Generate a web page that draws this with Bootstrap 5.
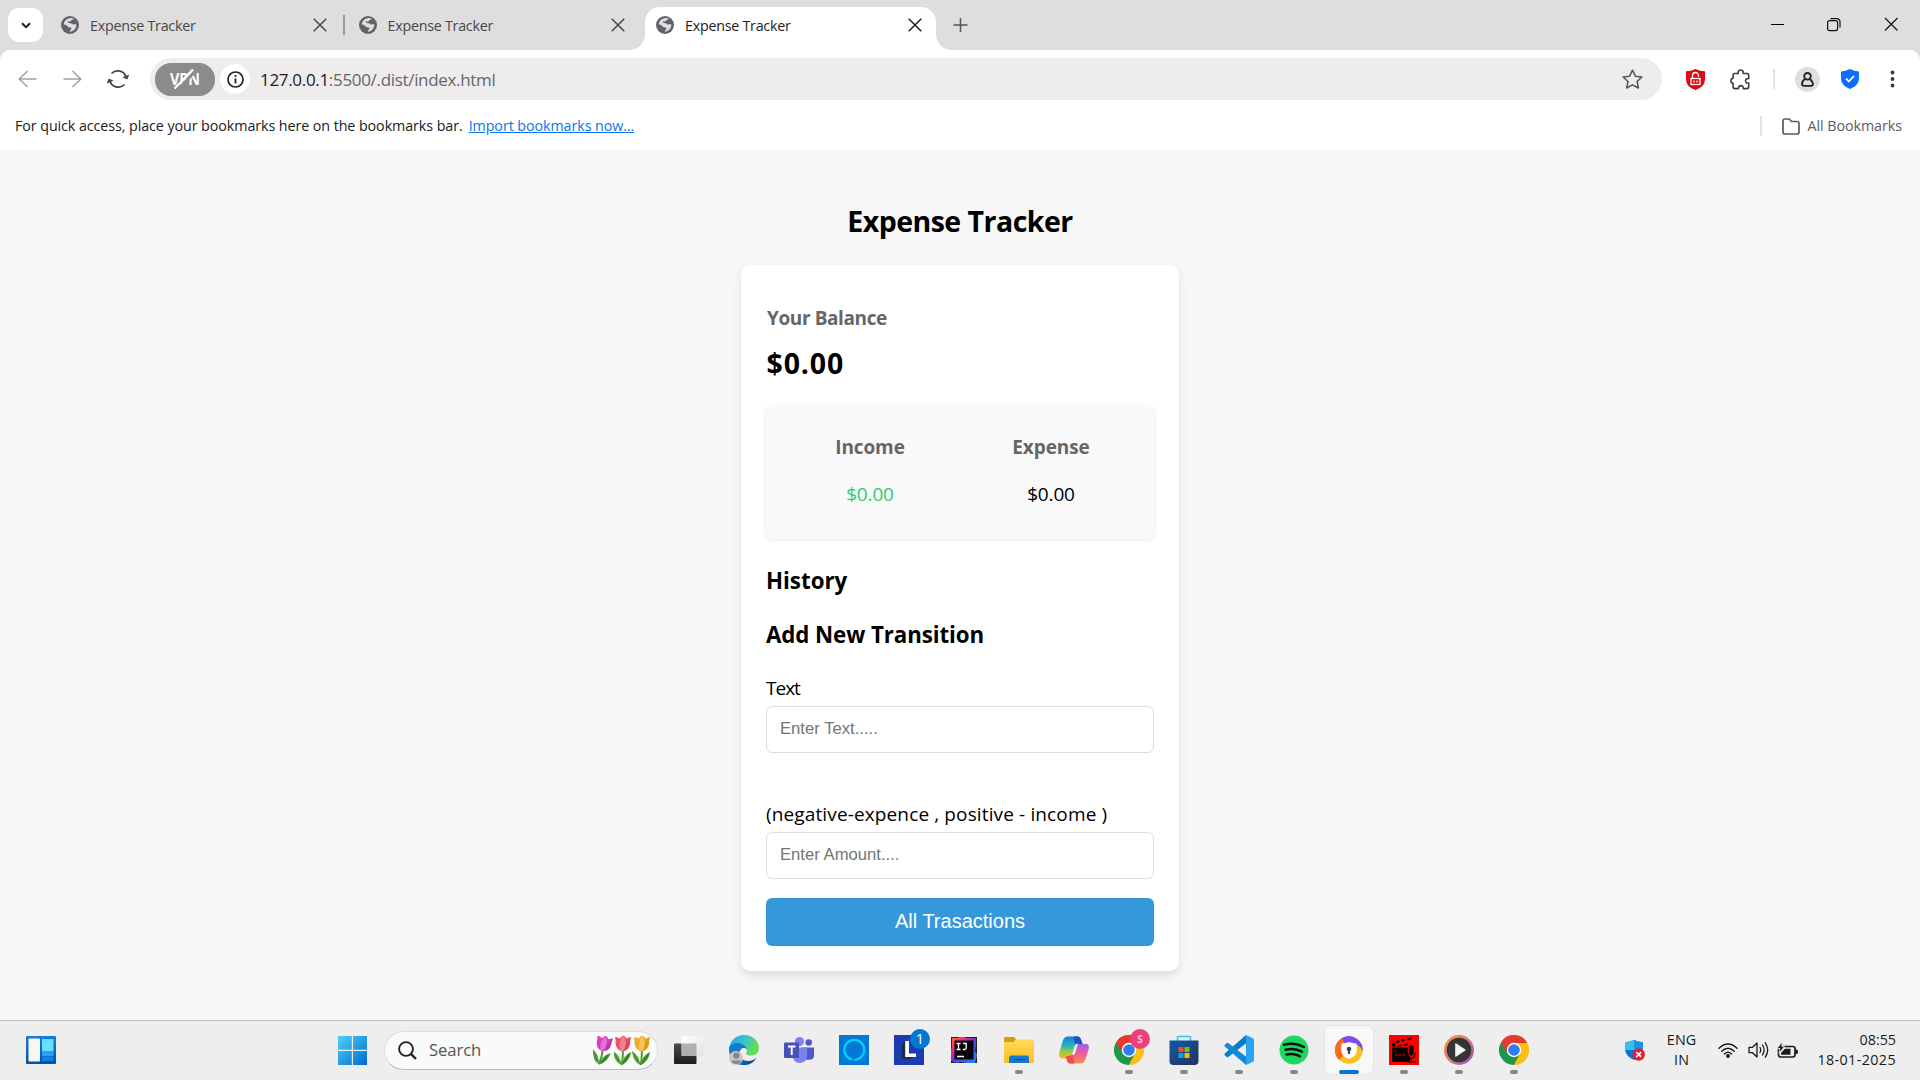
<!DOCTYPE html>
<html lang="en">
<head>
<meta charset="utf-8">
<meta name="viewport" content="width=device-width, initial-scale=1">
<title>Expense Tracker</title>
<link href="https://cdn.jsdelivr.net/npm/bootstrap@5.3.0/dist/css/bootstrap.min.css" rel="stylesheet">
<script src="https://cdn.jsdelivr.net/npm/bootstrap@5.3.0/dist/js/bootstrap.bundle.min.js" defer></script>
<style>
body{font-family:"Open Sans","Noto Sans",sans-serif;font-size:14.3px;line-height:20px;color:#000;background:#f7f7f7;height:1080px;overflow:hidden}
svg{display:block;flex:none}
/* tab strip */
.strip{height:50px;background:#dedede;padding-left:8px}
.tabfind{width:35px;height:34px;margin:8px 7px 0 0;border-radius:11px;background:#fff}
.tabitem{width:291px;height:43px;margin-top:7px;padding:0 14px 7px 11px;color:#474747;letter-spacing:-.26px}
.tabitem span{margin-left:11px;margin-top:2px}
.tabitem.current{background:#fff;border-radius:15px 15px 0 0;color:#1d1d1d;position:relative}
.tabitem.current::before,.tabitem.current::after{content:"";position:absolute;bottom:0;width:15px;height:15px}
.tabitem.current::before{left:-15px;background:radial-gradient(circle at 0 0,transparent 14.5px,#fff 15px)}
.tabitem.current::after{right:-15px;background:radial-gradient(circle at 100% 0,transparent 14.5px,#fff 15px)}
.tabsep{width:2px;height:20px;margin:15px 2.5px 0 2px;background:#999}
.tabgap{width:6.5px}
.newtab{margin:18px 0 0 15px}
.winbtns{margin:16px 21px 0 auto;gap:41px}
/* toolbar */
.chrometop{background:#dedede}
.toolbar-row{height:58px;background:#fff;border-radius:10px 10px 0 0;padding-left:18px}
.address{width:1512px;height:42px;border-radius:21px;background:#eeeced;padding-left:5px}
.vpn{width:60px;height:33px;border-radius:16px;background:#8b8b8b}
.infobtn{width:30px;height:30px;border-radius:15px;background:#fff;margin:0 10px 0 5px}
.url{font-size:17px;letter-spacing:-.32px;color:#666;padding-top:1px}
.url b{font-weight:400;color:#202020}
.vsep{width:2px;height:20px;background:#e3e3e3}
.avatar{width:25px;height:25px;background:#dedede}
.bookmarks{height:43px;background:#fff;padding:0 18px 6px 15px;border-bottom:1px solid #f3f3f3;letter-spacing:-.08px;color:#202020}
.bookmarks a{color:#0b74ee;margin-left:6px;letter-spacing:-.08px}
.allbm{color:#5c5c5c;letter-spacing:-.06px}
/* page */
.page{height:869px}
.title{font-size:28.5px;line-height:40px;font-weight:700;letter-spacing:-.52px;margin:50px 0 24px}
.tracker{width:438px;height:706px;border-radius:10px;background:#fff;padding:39px 25px 25px;box-shadow:0 5px 10px rgba(0,0,0,.1)}
.t19{font-size:19px;line-height:28px}
.grey{color:#666;font-weight:700}
.balance{letter-spacing:-.4px;padding-left:1px}
.caption-in{letter-spacing:-.1px}
.amount{font-size:28.5px;line-height:40px;font-weight:700;letter-spacing:.87px;margin:11px 0 23px;padding-left:.5px}
.sums{height:133px;border-radius:6px;background:#f9f9f9;box-shadow:0 1px 4px rgba(0,0,0,.1);padding:27px 12.5px 0 13.5px}
.sums>div{width:181px}
.money{margin-top:19px;letter-spacing:-.15px}
.gain{color:#2ecc71}
.sect{font-size:22.3px;line-height:32px;font-weight:700;margin-top:26px}
.sect+.sect{margin-top:22px;letter-spacing:-.08px}
.field{height:47px;border:1px solid #ddd;border-radius:6px;padding:0 13px 1px;font:16.67px "Liberation Sans",sans-serif;background:#fff}
.field::placeholder{color:#757575}
.lab-text{margin:23px 0 4px;letter-spacing:-1px}
.lab-amount{margin:47px 0 4px;letter-spacing:.13px}
.allbtn{height:48px;border:0;border-radius:6px;background:#3498db;color:#fff;font:20px "Liberation Sans",sans-serif;margin-top:19px;padding-bottom:2px}
/* taskbar */
.taskbar{height:60px;background:#eee;border-top:1px solid #bbb;padding:0 0 1px 26px}
.searchpill{width:274px;height:39px;border-radius:20px;background:#fafafa;border:1px solid #dcdcdc;border-bottom-color:#bbb;margin:0 7px 0 17px;padding:0 5px 0 13px}
.searchpill span{font-size:16.7px;color:#555;letter-spacing:-.12px;margin-left:12px}
.app{width:48px;height:48px;margin-right:7px;border-radius:6px;position:relative}
.app.run::after{content:"";position:absolute;left:20px;bottom:0;width:8px;height:4px;border-radius:2px;background:#868686}
.app.on{background:#f8f8f8;box-shadow:0 0 1px 1px #e4e4e4}
.app.on::after{left:14px;width:20px;background:#0078d4}
.pip{position:absolute;left:25px;top:3px;width:20px;height:20px;background:#0078d4;color:#fff;font-size:14.5px}
.pip.pink{background:#ec407a;color:#f9c3d4;font-size:10px;font-weight:700}
.tray{margin-right:24px;color:#1a1a1a}
.lang{margin:0 22px;letter-spacing:.15px}
.clock{margin-left:18px}
.clock span{letter-spacing:.4px}
</style>
</head>
<body>
<svg width="0" height="0" class="position-absolute">
<defs>
<symbol id="globe" viewBox="0 0 18 18"><circle cx="9" cy="9" r="9" fill="#5f6368"/><path d="M8.6 2.2c1.5-.4 3-.1 4.1.6-.4 1-1.200.9-2 1.300-.9.4-.8 1.500-1.900 1.500-.8 0-1.200-.4-2-.3-.3.9.3 1.700 1.400 1.800 1.600.1 3 .6 3.700 1.700 1.100-.7 2.100-.5 3.500-.3-.1 3.800-2.600 7-6.500 7.200-.3-.9.300-1.500 1-2 .6-.5.8-1.800-.2-2.100-1-.3-2.300-.4-3.100-1.200-.9-.9-1.100-2-3.900-1.900.2-3.100 2.300-5.700 5.900-6.300z" fill="#dedede"/></symbol>
<symbol id="cross" viewBox="0 0 14 14"><path d="M.7.7l12.600 12.600M13.300.7L.7 13.300" stroke="currentColor" stroke-width="1.500" fill="none"/></symbol>
<symbol id="gchrome" viewBox="0 0 30 30"><path d="M15 15L2 7.500A15 15 0 0 1 28 7.500z" fill="#e33b2e"/><path d="M15 15l13-7.500A15 15 0 0 1 15 30z" fill="#fcc012"/><path d="M2 7.500A15 15 0 0 0 15 30l6.200-11.300L15 15z" fill="#21964a"/><path d="M2 7.500L8.800 18.600 15 8h13A15 15 0 0 0 2 7.500z" fill="#e33b2e"/><path d="M15 8h13.200A15 15 0 0 1 15 30l6.300-11.400z" fill="#fcc012"/><circle cx="15" cy="15" r="7.200" fill="#fff"/><circle cx="15" cy="15" r="5.800" fill="#2f7ded"/></symbol>
<symbol id="tulip" viewBox="0 0 22 30"><path d="M10.500 13Q11.500 22 9.500 30" stroke="#4c9a34" stroke-width="2" fill="none"/><path d="M9.500 30Q2 27 1 16q7 4 8.500 14zM10 30q1-10 9-13-1 9-9 13z" fill="#5aab3c"/><path d="M9.500 30Q6 23 1 16q4 9 8.500 14zM10 30q6-5 9-13-7 6-9 13z" fill="#2f7d2b"/><path d="M3 2q3 0 5 1.500Q9.500 1 11.500.500 13.500 1.500 14.500 3.500q2-1.500 4.500-1.500-1 3-.8 6.500Q17.500 15 11 16.500 4 15 3.500 8.500 4 5 3 2z" fill="currentColor"/><path d="M11.500.5q-5 6-3.500 14Q10 16 11 16q5-7 .500-15.500z" fill="#fff" opacity=".28"/><path d="M18.500 2q-5.500 4-5.500 13.500 4.500-2 4.700-7z" fill="#000" opacity=".1"/></symbol>
<linearGradient id="win" x1="0" y1="0" x2="1" y2="1"><stop offset="0" stop-color="#4fd3fb"/><stop offset="1" stop-color="#0068cc"/></linearGradient>
<linearGradient id="wd" x1="0" y1="0" x2="0" y2="1"><stop offset="0" stop-color="#1580d8"/><stop offset="1" stop-color="#0b4f9e"/></linearGradient>
<linearGradient id="dark" x1="0" y1="0" x2="0" y2="1"><stop offset="0" stop-color="#4a4a4a"/><stop offset="1" stop-color="#1c1c1c"/></linearGradient>
<linearGradient id="lite" x1="0" y1="0" x2="1" y2="1"><stop offset="0" stop-color="#fff"/><stop offset="1" stop-color="#e2e2e2"/></linearGradient>
<linearGradient id="edgeA" x1="0" y1="0" x2="1" y2=".4"><stop offset="0" stop-color="#2aa6e8"/><stop offset=".5" stop-color="#35c1d4"/><stop offset="1" stop-color="#63e04c"/></linearGradient>
<linearGradient id="edgeB" x1="0" y1="0" x2="1" y2="1"><stop offset="0" stop-color="#1383d6"/><stop offset="1" stop-color="#0a3f86"/></linearGradient>
<linearGradient id="fold" x1="0" y1="0" x2="0" y2="1"><stop offset="0" stop-color="#ffda5c"/><stop offset="1" stop-color="#fcbc22"/></linearGradient>
<linearGradient id="copA" x1="0" y1="0" x2="0" y2="1"><stop offset="0" stop-color="#1a7fd4"/><stop offset=".4" stop-color="#22b3c4"/><stop offset=".7" stop-color="#9ecb3c"/><stop offset="1" stop-color="#fbb62b"/></linearGradient>
<linearGradient id="copB" x1="0" y1="0" x2="0" y2="1"><stop offset="0" stop-color="#a45cf0"/><stop offset=".5" stop-color="#ee5c98"/><stop offset="1" stop-color="#f98a4a"/></linearGradient>
<linearGradient id="store" x1="0" y1="0" x2="1" y2="1"><stop offset="0" stop-color="#0f5aa6"/><stop offset="1" stop-color="#27335c"/></linearGradient>
<linearGradient id="ij" x1="0" y1="0" x2="1" y2="1"><stop offset="0" stop-color="#fe7a1c"/><stop offset=".25" stop-color="#fb2b72"/><stop offset=".5" stop-color="#5a3ce0"/><stop offset="1" stop-color="#1c8cf5"/></linearGradient>
<linearGradient id="mp" x1="0" y1="0" x2="1" y2="1"><stop offset="0" stop-color="#f59339"/><stop offset=".5" stop-color="#d97b77"/><stop offset="1" stop-color="#8c50c8"/></linearGradient>
</defs>
</svg>

<header class="chrometop">
  <div class="strip d-flex">
    <div class="tabfind d-flex align-items-center justify-content-center"><svg width="10" height="7" viewBox="0 0 10 7"><path d="M1 1.200l4 4 4-4" stroke="#1f1f1f" stroke-width="2" fill="none"/></svg></div>
    <div class="tabitem d-flex align-items-center"><svg width="18" height="18"><use href="#globe"/></svg><span>Expense Tracker</span><svg class="ms-auto" width="14" height="14"><use href="#cross"/></svg></div>
    <div class="tabsep"></div>
    <div class="tabitem d-flex align-items-center"><svg width="18" height="18"><use href="#globe"/></svg><span>Expense Tracker</span><svg class="ms-auto" width="14" height="14"><use href="#cross"/></svg></div>
    <div class="tabgap"></div>
    <div class="tabitem current d-flex align-items-center"><svg width="18" height="18"><use href="#globe"/></svg><span>Expense Tracker</span><svg class="ms-auto" width="14" height="14"><use href="#cross"/></svg></div>
    <svg class="newtab" width="18" height="14" viewBox="0 0 18 14"><path d="M9.500 0v14M2.500 7h14" stroke="#555" stroke-width="1.500"/></svg>
    <div class="winbtns d-flex">
      <svg width="16" height="16" viewBox="0 0 16 16"><path d="M2 8.500h13" stroke="#000"/></svg>
      <svg width="16" height="16" viewBox="0 0 16 16" fill="none" stroke="#111" stroke-width="1.200"><rect x="1.600" y="4.600" width="10" height="10" rx="2"/><path d="M4.500 2.600h6.500a3 3 0 0 1 3 3v6"/></svg>
      <svg width="16" height="16" viewBox="0 0 16 16"><path d="M2 2l12.500 12.500M14.500 2L2 14.500" stroke="#111" stroke-width="1.200"/></svg>
    </div>
  </div>
  <div class="toolbar-row d-flex align-items-center">
    <svg width="19" height="20" viewBox="0 0 19 20"><path d="M9.500 2L1.200 10l8.300 8M1.200 10H18.500" stroke="#a2a2a2" stroke-width="1.500" fill="none"/></svg>
    <svg style="margin-left:26px" width="19" height="20" viewBox="0 0 19 20"><path d="M9.500 2l8.300 8-8.300 8M17.800 10H.5" stroke="#a2a2a2" stroke-width="1.500" fill="none"/></svg>
    <svg style="margin:0 20px 0 24px" width="24" height="22" viewBox="0 0 24 22" fill="none" stroke="#444" stroke-width="1.700"><path d="M5.500 5.500A8.800 8.800 0 0 1 20.300 9.500M18.500 16.500A8.800 8.800 0 0 1 3.700 12.500"/><path d="M23.300 6.500l-2 5-5-2.200zM.7 15.500l2-5 5 2.200z" fill="#444" stroke="none"/></svg>
    <div class="address d-flex align-items-center">
      <div class="vpn d-flex align-items-center justify-content-center"><svg width="32" height="22" viewBox="0 0 32 22"><text x="1" y="17" font-family="Open Sans, sans-serif" font-size="15.500" font-weight="700" fill="#fff" textLength="30" lengthAdjust="spacingAndGlyphs">VPN</text><path d="M9 22L27 2" stroke="#8b8b8b" stroke-width="3"/><path d="M5.500 20.500L24 1.500" stroke="#fff" stroke-width="2.400"/></svg></div>
      <div class="infobtn d-flex align-items-center justify-content-center"><svg width="17" height="17" viewBox="0 0 17 17"><circle cx="8.500" cy="8.500" r="7.500" fill="none" stroke="#222" stroke-width="1.700"/><path d="M8.500 7.400v5" stroke="#222" stroke-width="1.800"/><circle cx="8.500" cy="5" r="1.100" fill="#222"/></svg></div>
      <div class="url"><b>127.0.0.1</b>:5500/.dist/index.html</div>
      <svg class="ms-auto" style="margin-right:19px" width="21" height="20" viewBox="0 0 21 20"><path d="M10.500 1.200l2.900 6 6.500.8-4.800 4.500 1.300 6.500-5.900-3.200L4.700 19 6 12.500 1.100 8l6.500-.8z" fill="none" stroke="#555" stroke-width="1.500" stroke-linejoin="round"/></svg>
    </div>
    <svg style="margin-left:24px" width="19" height="21" viewBox="0 0 19 21"><path d="M9.500 0Q14 2.200 19 2.200V10q0 8-9.500 11Q0 18 0 10V2.200Q5 2.200 9.500 0z" fill="#e30613"/><rect x="5" y="9.500" width="9" height="6" fill="none" stroke="#fff" stroke-width="1.300"/><path d="M6.500 9V6.500a3 3 0 0 1 6 0V8M8 11.500v2M11 11.500v2" stroke="#fff" stroke-width="1.300" fill="none"/></svg>
    <svg style="margin-left:25px" width="21" height="21" viewBox="0 0 21 21"><path d="M4.500 4.500h3.700q-.5-3.300 2.500-3.500 3 .2 2.500 3.500h3.600q1.900 0 1.900 1.900v3.200q-3-.3-3.200 2.200.2 2.500 3.200 2.200v3.700q0 1.900-1.900 1.900h-3.500q.1-3-2.400-3-2.500 0-2.500 3H5q-1.900 0-1.900-1.900v-3.300Q.9 14 .9 11.800q0-2.200 2.200-2.500V6q0-1.500 1.400-1.500z" fill="none" stroke="#3c3c3c" stroke-width="1.600" stroke-linejoin="round"/></svg>
    <div class="vsep" style="margin:0 20px 0 22px"></div>
    <div class="avatar rounded-circle d-flex align-items-center justify-content-center"><svg width="13" height="15" viewBox="0 0 13 15" fill="none" stroke="#1f1f1f" stroke-width="1.800"><circle cx="6.500" cy="4.300" r="3.300"/><path d="M4 7C1.800 8.200 1.200 9.800 1 12q0 1.800 2 1.800h7q2 0 2-1.800-.2-2.200-3-5"/></svg></div>
    <svg style="margin-left:21px" width="18" height="20" viewBox="0 0 18 20"><path d="M9 0q4.500 2.300 9 2.600V9q0 7.500-9 11Q0 16.500 0 9V2.600Q4.500 2.300 9 0z" fill="#0d6efd"/><path d="M5 9.700l2.800 2.800L13 7" stroke="#fff" stroke-width="1.800" fill="none"/></svg>
    <svg style="margin-left:31px" width="5" height="18" viewBox="0 0 5 18" fill="#3a3a3a"><circle cx="2.500" cy="2.500" r="1.900"/><circle cx="2.500" cy="9" r="1.900"/><circle cx="2.500" cy="15.500" r="1.900"/></svg>
  </div>
  <div class="bookmarks d-flex align-items-center">
    <span>For quick access, place your bookmarks here on the bookmarks bar.</span><a href="#">Import bookmarks now...</a>
    <div class="vsep ms-auto"></div>
    <svg style="margin:0 8px 0 20px" width="18" height="17" viewBox="0 0 18 17"><path d="M3 1h4.300l2.200 2.500H15q2 0 2 2V14q0 2-2 2H3q-2 0-2-2V3q0-2 2-2z" fill="none" stroke="#5c5c5c" stroke-width="1.700"/></svg>
    <span class="allbm">All Bookmarks</span>
  </div>
</header>

<main class="page d-flex flex-column align-items-center">
  <h2 class="title">Expense Tracker</h2>
  <div class="tracker d-flex flex-column">
    <div class="t19 grey balance">Your Balance</div>
    <div class="amount">$0.00</div>
    <div class="sums d-flex text-center">
      <div><div class="t19 grey caption-in">Income</div><div class="t19 money gain">$0.00</div></div>
      <div><div class="t19 grey caption-in">Expense</div><div class="t19 money">$0.00</div></div>
    </div>
    <div class="sect">History</div>
    <div class="sect">Add New Transition</div>
    <label class="t19 lab-text" for="text">Text</label>
    <input class="field w-100" id="text" placeholder="Enter Text.....">
    <label class="t19 lab-amount" for="amt">(negative-expence , positive - income )</label>
    <input class="field w-100" id="amt" placeholder="Enter Amount....">
    <button class="allbtn w-100">All Trasactions</button>
  </div>
</main>

<footer class="taskbar d-flex align-items-center">
  <svg width="30" height="28" viewBox="0 0 30 28"><rect width="30" height="28" rx="1" fill="url(#wd)"/><rect x="2.500" y="2.500" width="11.500" height="23" rx="1" fill="#f6f6f6"/><path d="M16 3h11.500v12H16z" fill="#69dcff"/><path d="M16 15h11.500v5H16z" fill="#22a4f8"/><path d="M16 20.500h11.500V25H16z" fill="#0a84ec"/></svg>
  <svg style="margin-left:282px" width="29" height="29" viewBox="0 0 29 29"><path d="M0 0h13.800v13.800H0zM15 0h14v13.800H15zM0 15h13.800v14H0zM15 15h14v14H15z" fill="url(#win)"/></svg>
  <div class="searchpill d-flex align-items-center">
    <svg width="19" height="19" viewBox="0 0 19 19"><circle cx="8" cy="8" r="6.900" fill="#fff" stroke="#222" stroke-width="1.900"/><path d="M12.800 12.800l5.200 5.200" stroke="#222" stroke-width="2.400"/></svg>
    <span>Search</span>
    <svg class="ms-auto" width="22" height="30" viewBox="0 0 22 30" color="#d83cc0"><g transform="rotate(10 11 15)"><use href="#tulip" width="22" height="30"/></g></svg>
    <svg width="18" height="30" viewBox="2 0 18 30" color="#ea5468"><use href="#tulip" width="22" height="30"/></svg>
    <svg width="20" height="30" viewBox="1 0 20 30" color="#f0ab22"><use href="#tulip" width="22" height="30"/></svg>
  </div>
  <div class="app d-flex align-items-center justify-content-center"><svg width="30" height="28" viewBox="0 0 30 28"><rect y="7.500" width="22.500" height="20.500" rx="1" fill="url(#dark)"/><rect x="7.500" width="22" height="20" rx="1" fill="url(#lite)"/><path d="M7.500 7.500h15V20h-15z" fill="#999" opacity=".75"/></svg></div>
  <div class="app d-flex align-items-center justify-content-center"><svg width="30" height="30" viewBox="0 0 30 30"><path d="M0 14C1 5 7.500 0 15 0c9 0 15 6.500 15 13 0 5-4 7.500-8 7.500-4.500 0-6-1.700-4.500-3.500 2-2.500-.5-6.500-4.500-6.500C8 8 3 9 0 14z" fill="url(#edgeA)"/><path d="M0 15c0-5 4-7 8-7 5 0 10 3 10 7-2-3.500-7.500-2-7.500 3.500 0 5 4.500 9.500 10 9.500-3 2-6 2-7.500 2C5.500 30 0 23 0 15z" fill="#117bd0"/><path d="M11 16c-2 6 3 10 8 10 4 0 6.500-1.500 8.500-3.500C25.500 27 21 30 16 30 9 30 6.500 20 11 16z" fill="url(#edgeB)"/><circle cx="7" cy="23" r="7" fill="#c8c8c8"/><circle cx="7.300" cy="20.600" r="3.200" fill="#858585"/><path d="M2.500 25.500h9.600Q12 29 7.300 29q-4.500 0-4.800-3.500z" fill="#858585"/></svg></div>
  <div class="app d-flex align-items-center justify-content-center"><svg width="30" height="26" viewBox="0 0 30 26"><circle cx="15.500" cy="4.500" r="4.500" fill="#7b83eb"/><circle cx="24.700" cy="5.500" r="3.300" fill="#5059c9"/><path d="M18 10.500h12v7.800q0 4.500-5 4.500h-5z" fill="#5059c9"/><path d="M9 10.500h14V19q-.5 7-7.300 7Q9 26 9 19z" fill="#7b83eb"/><rect y="5.500" width="15" height="15.500" rx="1.200" fill="#4850ba"/><path d="M4 9.500h7.500M7.700 9.500v8.500" stroke="#fff" stroke-width="1.900"/></svg></div>
  <div class="app d-flex align-items-center justify-content-center"><svg width="30" height="30" viewBox="0 0 30 30"><path d="M0 0h30v30H0z" fill="#0078d7"/><path d="M13 24.500a9.900 9.900 0 1 1 3.500.2" fill="none" stroke="#00d2ff" stroke-width="2.300"/><path d="M12.500 23.800l4 2.500 2.500-2.200q-3 .8-6.500-.3z" fill="#00d2ff"/></svg></div>
  <div class="app d-flex align-items-center justify-content-center"><svg width="30" height="30" viewBox="0 0 30 30"><path d="M0 0h30v30H0z" fill="#1d3bb0"/><path d="M8 9l3.500-3v13H20l-3 5H8z" fill="#15304f"/><path d="M11.200 6H15v12.500h7V22H11.200z" fill="#fff"/></svg><span class="pip rounded-circle d-flex align-items-center justify-content-center lh-1">1</span></div>
  <div class="app d-flex align-items-center justify-content-center"><svg width="26" height="26" viewBox="0 0 26 26"><path d="M0 0h26v26H0z" fill="#222"/><path d="M1 1h6l1-1h6l1 1h10v7l-1 6 2 4-2 8h-8l-6-1-4 1-6-2V14l1-5z" fill="url(#ij)"/><path d="M3.500 3.500h19v19h-19z" fill="#0a0308"/><path d="M5.500 6.500h4M7.500 6.500v6M5.500 12.500h4M12 6.500h3.200v4.300q0 1.700-1.700 1.700h-1.700M6 19.500h7" stroke="#fff" stroke-width="1.300" fill="none"/></svg></div>
  <div class="app run d-flex align-items-center justify-content-center"><svg width="30" height="28" viewBox="0 0 30 28"><path d="M0 7V2.500Q0 1 1.500 1H10l3 3.500L10 7z" fill="#dd9a0c"/><path d="M0 6h9l3-2.500h16.500Q30 3.500 30 5v20.500q0 1.500-1.500 1.500h-27Q0 27 0 25.500z" fill="url(#fold)"/><path d="M5 27v-5q0-2.500 2.500-2.500h15q2.500 0 2.500 2.500v5z" fill="#1479cf"/><path d="M9 23.500h12" stroke="#0b4f90" stroke-width="1.200"/></svg></div>
  <div class="app d-flex align-items-center justify-content-center"><svg width="30" height="28" viewBox="0 0 30 28"><path d="M9 .5h10q2 0 3 3L23.500 8H20q-3 0-4 3l-2.500 8q-1.200 3.500-4 3.500H3Q-1 22 .5 16l3-10.500Q5 .5 9 .500z" fill="url(#copA)"/><path d="M14.500.5H19q2 0 3 3L23.500 8H20q-2.500 0-3.800 2z" fill="#1e4fc4"/><path d="M21 27.500H11q-2 0-3-3L7 20h3q3 0 4-3l2.500-8Q17.700 8 20.500 8H27q4 0 2.500 5.500L26.500 23q-1.500 4.500-5.500 4.500z" fill="url(#copB)"/><path d="M15.500 27.500H11q-2 0-3-3L7 20h3q2.500 0 3.800-2z" fill="#ef4f46"/><path d="M13 18.500l3-9.500q1-1.500 3-1.500l-3 10q-1.200 2-3 1z" fill="#f4f0f4"/></svg></div>
  <div class="app run d-flex align-items-center justify-content-center"><svg width="30" height="30"><use href="#gchrome"/></svg><span class="pip pink rounded-circle d-flex align-items-center justify-content-center lh-1">S</span></div>
  <div class="app run d-flex align-items-center justify-content-center"><svg width="30" height="30" viewBox="0 0 30 30"><path d="M8.500 7V2.500q0-1 1-1h11q1 0 1 1V7" fill="none" stroke="#2fc3f7" stroke-width="1.600"/><path d="M.5 5.500h29V26q0 4-4 4h-21q-4 0-4-4z" fill="url(#store)"/><path d="M9.500 12h5v5h-5z" fill="#f25022"/><path d="M15.500 12h5v5h-5z" fill="#7fba00"/><path d="M9.500 18h5v5h-5z" fill="#00a4ef"/><path d="M15.500 18h5v5h-5z" fill="#ffb900"/></svg></div>
  <div class="app run d-flex align-items-center justify-content-center"><svg width="30" height="30" viewBox="0 0 30 30"><path d="M22 0L.8 18.500q-.8 1 0 1.800l1.800 1.600q.8.500 1.600 0L22.500 8z" fill="#0a7cc4"/><path d="M22 30L.8 11.500q-.8-1 0-1.800l1.800-1.600q.8-.5 1.600 0L22.500 22z" fill="#1289d2"/><path d="M22 0l7 3.200q1 .5 1 1.600v20.400q0 1.100-1 1.600L22 30z" fill="#2aa4f2"/></svg></div>
  <div class="app run d-flex align-items-center justify-content-center"><svg width="30" height="30" viewBox="0 0 30 30"><circle cx="15" cy="15" r="14.500" fill="#1ed760"/><path d="M5 9.800q10.500-2.800 20 2.200M6.500 14.800q9-2.300 16.500 1.900M7.500 19.500q7.500-1.600 13.500 1.800" fill="none" stroke="#0c0f0d" stroke-width="2.500" stroke-linecap="round"/></svg></div>
  <div class="app run on d-flex align-items-center justify-content-center"><svg width="28" height="28" viewBox="0 0 28 28"><circle cx="14" cy="14" r="13.700" fill="#f9c21b"/><path d="M14 14L4 24A13.700 13.700 0 0 1 9.500 1z" fill="#fb6a1c"/><path d="M14 14L7 2.200A13.700 13.700 0 0 1 27.500 16Q26 9 19 8z" fill="#7e4af2"/><path d="M14 6q3 1.200 7.500 1.500Q24 20 14 23 4 20 6.500 7.500 11 7.200 14 6z" fill="#fff"/><circle cx="14" cy="13" r="2.300" fill="#3a3f63"/><path d="M12.900 13h2.200v5h-2.200z" fill="#3a3f63"/></svg></div>
  <div class="app run d-flex align-items-center justify-content-center"><svg width="30" height="30" viewBox="0 0 30 30"><path d="M0 0h30v30H0z" fill="#fe0000"/><path d="M3 12.500h18V27H3zM2.500 9l2.500-2 2 4-3 1zM6.500 6.500l3-1.500 1.500 2-3.500 1.500zM12 4.500l3-1 1 2-3 1.500zM18 3.500l5-1-1.500 2.300-2.500.7zM8 11l3-1.500h3L11 12zM15 9.500l4-1.500-1 3h-3z" fill="#120000"/><rect x="19.500" y="10" width="5.500" height="11" rx="2.700" fill="#120000" stroke="#fe0000" stroke-width=".8"/><path d="M18 17q0 6 4.200 6t4.300-6M22.200 23v4M18 27h9" fill="none" stroke="#120000" stroke-width="1.200"/><path d="M6 20h2M9.500 20h3M14 20h2" stroke="#a00" stroke-width="1.500"/></svg></div>
  <div class="app run d-flex align-items-center justify-content-center"><svg width="30" height="30" viewBox="0 0 30 30"><circle cx="15" cy="15" r="15" fill="url(#mp)"/><circle cx="15" cy="15" r="12.300" fill="#353535"/><path d="M11.200 8.500Q11.200 8 12 8.300l9.300 6.200q.6.500 0 1L12 21.700q-.8.300-.8-.3z" fill="#f4f4f4"/></svg></div>
  <div class="app run d-flex align-items-center justify-content-center"><svg width="30" height="30"><use href="#gchrome"/></svg></div>
  <div class="tray d-flex align-items-center ms-auto">
    <svg width="20" height="21" viewBox="0 0 20 21"><path d="M9 0q4 2 9 2.200V9q0 7-9 11Q0 16 0 9V2.200Q5 2 9 0z" fill="#0a74d2"/><path d="M9 0v10H0V2.200Q5 2 9 0z" fill="#35c0f0"/><path d="M9 0q4 2 9 2.200V10H9z" fill="#1d93e4"/><circle cx="13.700" cy="14.500" r="6.200" fill="#dd2032"/><path d="M11.300 12.100l4.800 4.800M16.100 12.100l-4.800 4.800" stroke="#fff" stroke-width="1.700"/></svg>
    <div class="lang text-center">ENG<br>IN</div>
    <svg width="20" height="15" viewBox="0 0 20 15" fill="none" stroke="#1a1a1a" stroke-width="1.400" stroke-linecap="round"><path d="M1 5.200q9-8.500 18 0M3.800 8.200q6.200-6 12.400 0M6.500 11q3.500-3.400 7 0"/><circle cx="10" cy="13" r="1.200" fill="#1a1a1a"/></svg>
    <svg style="margin-left:10px" width="21" height="18" viewBox="0 0 21 18" fill="none" stroke="#1a1a1a" stroke-width="1.300" stroke-linecap="round"><path d="M1 6.300h3.500L9 2v14l-4.500-4.300H1z" stroke-linejoin="round"/><path d="M12 6.500q1.500 2.500 0 5M14.500 4q3.300 5 0 10M17.300 1.800q4.800 7.200 0 14.400"/></svg>
    <svg style="margin-left:8px" width="22" height="17" viewBox="0 0 22 17"><rect x="1.500" y="4.500" width="16.500" height="10.500" rx="2.200" fill="none" stroke="#1a1a1a" stroke-width="1.700"/><path d="M18.500 7.500h1q1.500 0 1.500 2.200T19.500 12h-1z" fill="#1a1a1a"/><path d="M4 12.800V11l4-4.300h5.500v6.100z" fill="#1a1a1a"/><path d="M5.200-.5L.2 6.500h2.700L2 11.500l5.500-7H4.800z" fill="#1a1a1a" stroke="#eee" stroke-width=".8"/></svg>
    <div class="clock text-end">08:55<br><span>18-01-2025</span></div>
  </div>
</footer>
</body>
</html>
